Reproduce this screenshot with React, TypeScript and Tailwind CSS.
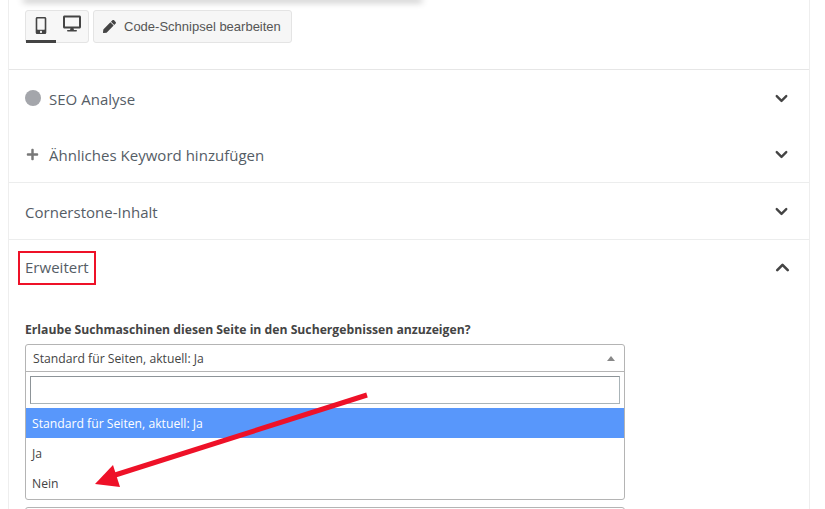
import { ChevronDown, ChevronUp } from 'lucide-react'
import { FaDesktop, FaMobileAlt, FaPen, FaPlus } from 'react-icons/fa'
import type { ReactNode } from 'react'

function Row({ children, up, border = true, h = 'h-[57px]' }: { children: ReactNode; up?: boolean; border?: boolean; h?: string }) {
  return (
    <div className={`flex items-center justify-between pl-[16px] pr-[18px] text-[#555d66] ${h} ${border ? 'border-b border-[#eceded]' : ''}`}>
      <div className="flex items-center pt-[2px] text-[15px] tracking-[0.02px] font-['Open_Sans',sans-serif]">{children}</div>
      {up ? (
        <ChevronUp className="w-[21px] h-[21px] -mt-[2px] -mr-[2px] text-[#444]" strokeWidth={3} />
      ) : (
        <ChevronDown className="w-[19px] h-[19px] text-[#444]" strokeWidth={3} />
      )}
    </div>
  )
}

export default function App() {
  return (
    <div className="relative w-[825px] h-[509px] overflow-hidden bg-white font-['Open_Sans',sans-serif]">
      <div className="mx-2 w-[802px] h-full border-x border-[#eeeeee]">
        {/* Preview bottom + buttons */}
        <div className="h-[70px] border-b border-[#e6e6e6] pl-[16px]">
          <div className="w-[395px] h-0 shadow-[0_0_7px_2px_rgba(0,0,0,0.3)]" />
          <div className="flex gap-[4px] pt-[10px]">
            <div className="flex w-[64px] h-[33px] rounded-[3px] border border-[#e4e4e4] bg-[#f7f7f7]">
              <div className="flex-1 flex justify-center pt-[6px] border-b-[3px] border-[#444] -mb-px">
                <FaMobileAlt className="w-[16px] h-[17px] text-[#444]" />
              </div>
              <div className="w-[32px] flex justify-center pt-[4px]">
                <FaDesktop className="w-[18px] h-[17px] text-[#444]" />
              </div>
            </div>
            <div className="flex items-center w-[199px] h-[33px] rounded-[3px] border border-[#e4e4e4] bg-[#f6f6f6] pl-[9px] gap-[8px] text-[13px] font-['Liberation_Sans',sans-serif] text-[#555]">
              <FaPen className="w-[13px] h-[13px] text-[#444]" />
              <span>Code-Schnipsel bearbeiten</span>
            </div>
          </div>
        </div>

        <Row border={false} h="h-[56px]">
          <span className="w-[16px] h-[16px] rounded-full bg-[#a4a6ab] mr-[8px] -mt-[3px]" />
          SEO Analyse
        </Row>
        <Row h="h-[57px]">
          <FaPlus className="w-[13px] h-[13px] text-[#777] mr-[10px] ml-[1px] -mt-[2px]" />
          Ähnliches Keyword hinzufügen
        </Row>
        <Row>Cornerstone-Inhalt</Row>
        <Row up border={false} h="h-[56px]">
          <span className="relative -mt-[4px]">
            Erweitert
            <span className="absolute -left-[7px] -right-[7px] -top-[5px] -bottom-[7px] border-2 border-[#ee1128]" />
          </span>
        </Row>

        {/* Robots select */}
        <div className="pl-[16px] pt-[25px]">
          <p className="text-[12.2px] leading-[18px] font-bold text-[#444]">
            Erlaube Suchmaschinen diesen Seite in den Suchergebnissen anzuzeigen?
          </p>
          <div className="mt-[5px] w-[600px] h-[156px] rounded-[3px] border border-[#b4b4b4] bg-white text-[12.2px] text-[#444]">
            <div className="flex items-center justify-between h-[27px] border-b border-[#b4b4b4] pl-[7px] pr-[9px]">
              <span className="pt-[2px]">Standard für Seiten, aktuell: Ja</span>
              <span className="w-0 h-0 border-x-[4px] border-x-transparent border-b-[5px] border-b-[#888]" />
            </div>
            <div className="px-[4px] pt-[4px]">
              <div className="h-[28px] border border-[#aab4b8] border-t-[#8d9498] border-l-[#8d9498] bg-white" />
            </div>
            <div className="mt-[4px] flex items-center h-[30px] bg-[#5897fb] pl-[6px] pt-[3px] text-white">
              Standard für Seiten, aktuell: Ja
            </div>
            <div className="flex items-center h-[30px] pl-[6px] pt-[3px]">Ja</div>
            <div className="flex items-center h-[30px] pl-[6px] pt-[3px]">Nein</div>
          </div>
          <div className="mt-[7px] w-[600px] h-[30px] rounded-[3px] border border-[#b4b4b4]" />
        </div>
      </div>

      {/* Annotation arrow */}
      <svg className="absolute left-0 top-0 pointer-events-none" width="825" height="509" viewBox="0 0 825 509">
        <line x1="367" y1="395" x2="112" y2="476" stroke="#ee1128" strokeWidth="5" />
        <polygon points="95,484 113,465 120,487" fill="#ee1128" />
      </svg>
    </div>
  )
}
